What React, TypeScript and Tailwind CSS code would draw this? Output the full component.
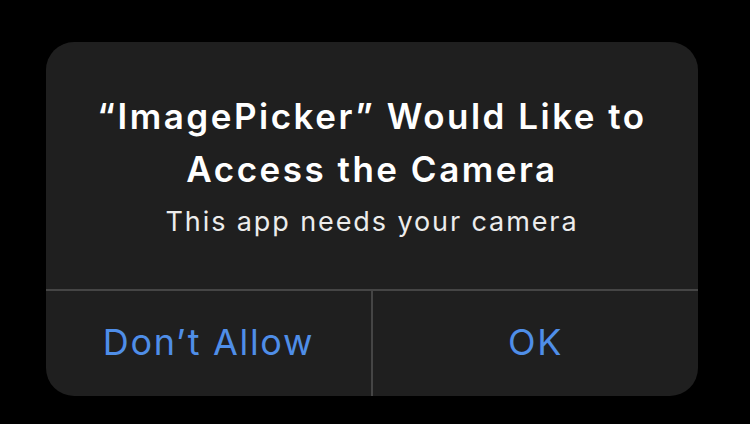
const App = () => {
    return (
        <div className="w-[750px] h-[424px] bg-black flex items-start justify-start pt-[42px] pl-[46px]" style={{ fontFamily: "Inter, 'Noto Sans', sans-serif" }}>
            <div className="w-[652px] h-[354px] bg-[#1f1f1f] rounded-[28px] flex flex-col overflow-hidden">
                <div className="h-[247px] flex flex-col items-center pt-[48px]">
                    <div className="text-white text-[35px] leading-[53px] font-semibold text-center tracking-[2.5px]">
                        “ImagePicker” Would Like to
                        <br />
                        Access the Camera
                    </div>
                    <div className="text-[#ececec] text-[27px] leading-[40px] mt-[6px] tracking-[1.9px]">This app needs your camera</div>
                </div>
                <div className="h-[2px] bg-[#454545]" />
                <div className="flex flex-1">
                    <button className="flex-1 flex items-center justify-center text-[#4f8ee8] text-[36px] pb-[4px] tracking-[1.7px]">Don’t Allow</button>
                    <div className="w-[2px] bg-[#454545]" />
                    <button className="flex-1 flex items-center justify-center text-[#4f8ee8] text-[36px] pb-[4px] tracking-[1.7px]">OK</button>
                </div>
            </div>
        </div>
    )
}

export default App;
